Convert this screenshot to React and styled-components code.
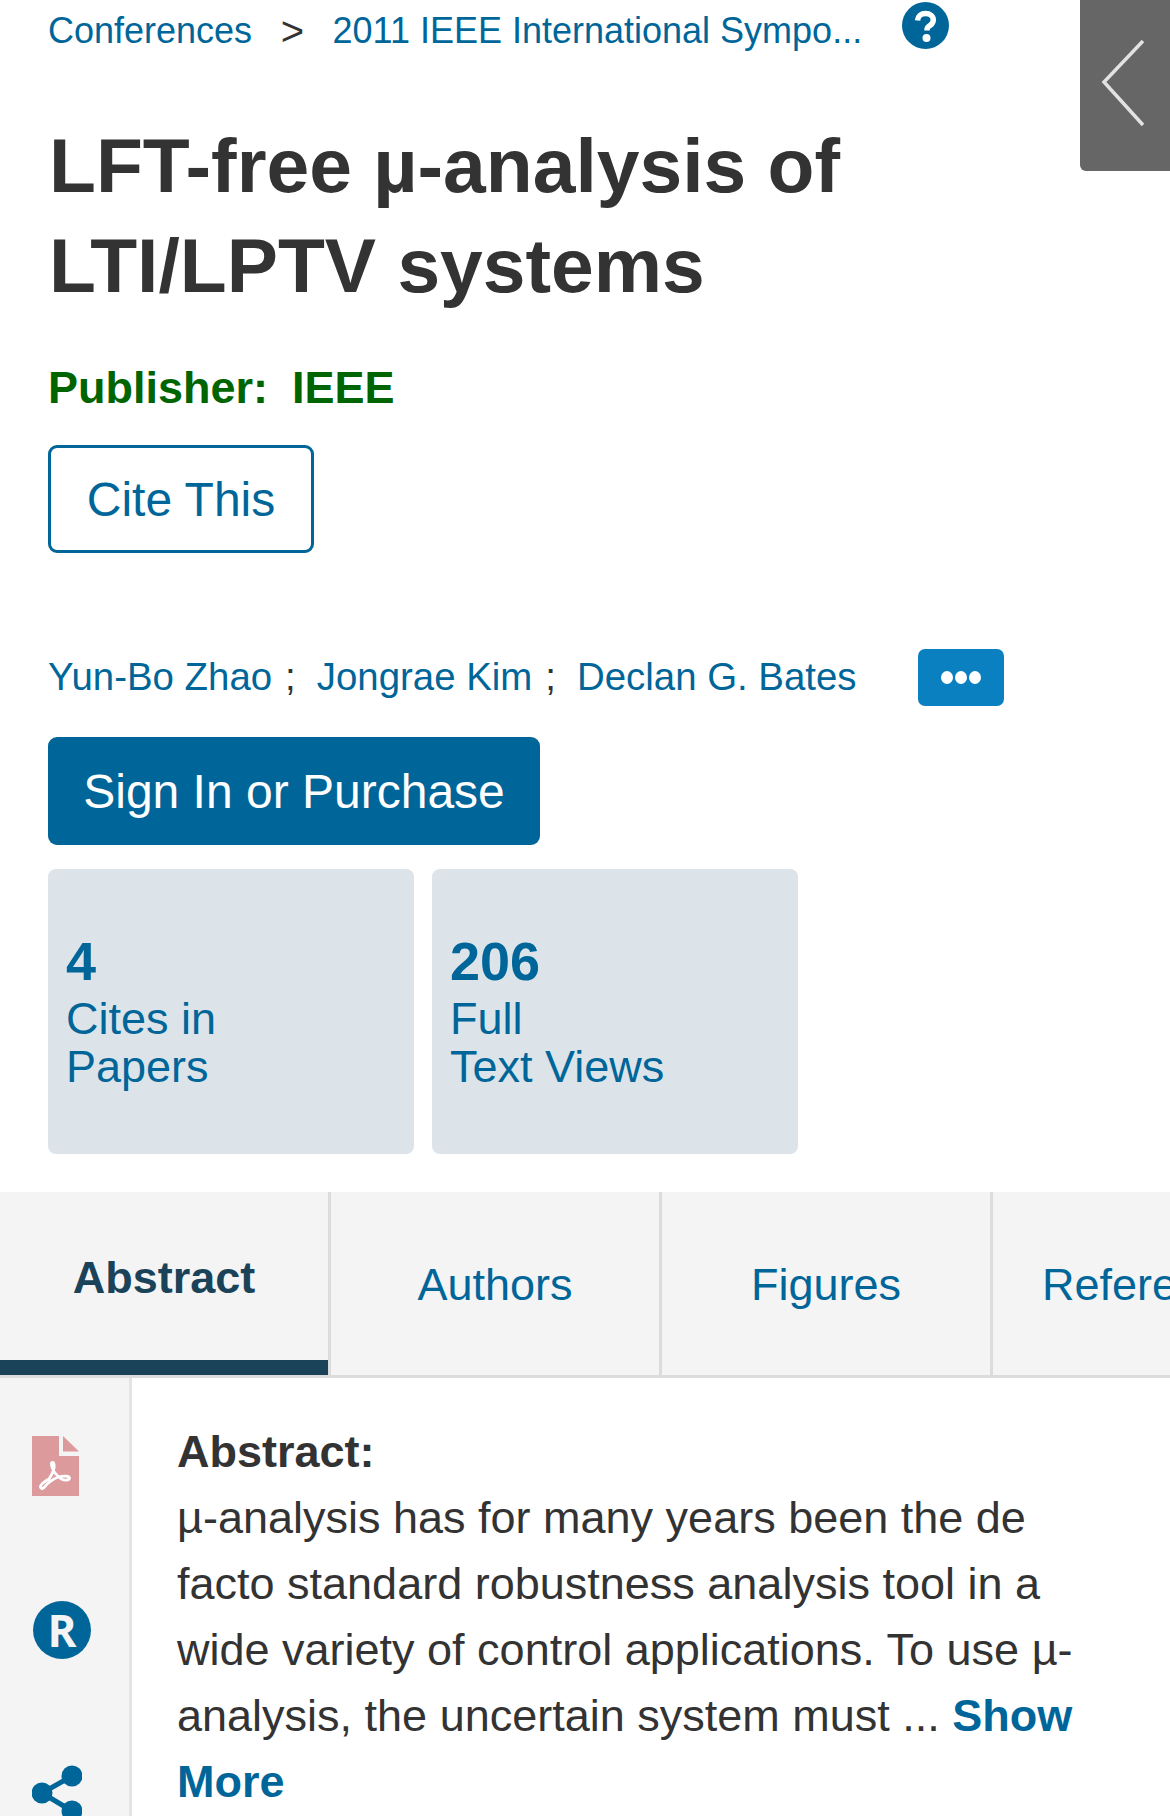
import styled, { createGlobalStyle } from "styled-components"

const GlobalStyle = createGlobalStyle`
    html, body {
        margin: 0;
        padding: 0;
        background: #fff;
        overflow: hidden;
    }
    * { box-sizing: border-box; }
`;

const tabs = ["Abstract", "Authors", "Figures", "References"];

const authors = ["Yun-Bo Zhao", "Jongrae Kim", "Declan G. Bates"];

const metrics = [
    { value: "4", lines: ["Cites in", "Papers"] },
    { value: "206", lines: ["Full", "Text Views"] },
];

export default function App() {
    return (
        <Page>
            <GlobalStyle />
            <CollapseHandle>
                <svg width="46" height="90" viewBox="0 0 46 90">
                    <path d="M42 3 L3 44 L42 87" fill="none" stroke="#e2e2e2" strokeWidth="3.500" />
                </svg>
            </CollapseHandle>

            <Header>
                <Breadcrumb>
                    <Crumb>Conferences</Crumb>
                    <CrumbSep>&gt;</CrumbSep>
                    <Crumb>2011 IEEE International Sympo...</Crumb>
                    <HelpIcon viewBox="0 0 47 47">
                        <circle cx="23.5" cy="23.5" r="23.5" fill="#006699" />
                        <path d="M15.5 18.5c.4-4.6 3.6-7 8-7 4.600 0 7.800 2.600 7.800 6.500 0 3-1.700 4.500-3.700 5.800-1.800 1.200-2.600 2-2.600 4v.7" fill="none" stroke="#fff" strokeWidth="5.500" />
                        <circle cx="24.500" cy="36" r="4" fill="#fff" />
                    </HelpIcon>
                </Breadcrumb>

                <Title>LFT-free µ-analysis of<br />LTI/LPTV systems</Title>
                <Publisher><span>Publisher:</span><span>IEEE</span></Publisher>
                <CiteButton>Cite This</CiteButton>

                <AuthorRow>
                    {authors.map((a, i) => (
                        <Author key={a}>
                            <AuthorLink>{a}</AuthorLink>
                            {i < authors.length - 1 && <AuthorSep>;</AuthorSep>}
                        </Author>
                    ))}
                    <MoreButton>
                        <Dot /><Dot /><Dot />
                    </MoreButton>
                </AuthorRow>

                <SignIn>Sign In or Purchase</SignIn>

                <Metrics>
                    {metrics.map((m) => (
                        <MetricCard key={m.value}>
                            <MetricValue>{m.value}</MetricValue>
                            {m.lines.map((l) => <MetricLabel key={l}>{l}</MetricLabel>)}
                        </MetricCard>
                    ))}
                </Metrics>
            </Header>

            <TabBar>
                {tabs.map((t, i) => (
                    <Tab key={t} $active={i === 0}>{t}</Tab>
                ))}
            </TabBar>

            <Body>
                <Rail>
                    <svg width="47" height="60" viewBox="0 0 47 60">
                        <path d="M0 0H27V20H47V60H0Z" fill="#dc9a9d" />
                        <path d="M31 0L47 15.500H31Z" fill="#dc9a9d" />
                        <path d="M9 52c-2-2 2-6 8-9 4-6 6-11 5-15-.5-2.500-3-2-2.500 1 .5 5 5 11 10 14 4 2 8 1 8-1s-6-2.500-11-1c-6 2-12 7-14 10-1 1.500-2.500 2-3.500 1z" fill="none" stroke="#fff" strokeWidth="2.800" strokeLinejoin="round" />
                    </svg>
                    <RIcon>R</RIcon>
                    <svg width="50" height="60" viewBox="0 0 50 60">
                        <circle cx="40" cy="11" r="10.500" fill="#006699" />
                        <circle cx="10" cy="28" r="10.500" fill="#006699" />
                        <circle cx="40" cy="46" r="10.500" fill="#006699" />
                        <path d="M40 11L10 28L40 46" fill="none" stroke="#006699" strokeWidth="5" />
                    </svg>
                </Rail>
                <Content>
                    <AbstractHead>Abstract:</AbstractHead>
                    <AbstractText>
                        µ-analysis has for many years been the de<br />
                        facto standard robustness analysis tool in a<br />
                        wide variety of control applications. To use µ-<br />
                        analysis, the uncertain system must ... <ShowMore>Show<br />More</ShowMore>
                    </AbstractText>
                </Content>
            </Body>
        </Page>
    )
};

const Page = styled.div`
    position: relative;
    width: 1170px;
    height: 1816px;
    overflow: hidden;
    background: #fff;
    font-family: "Liberation Sans", Arial, sans-serif;
    color: #333;
`;

const CollapseHandle = styled.div`
    position: absolute;
    top: 0;
    right: 0;
    width: 90px;
    height: 171px;
    background: #666;
    border-bottom-left-radius: 6px;
    padding: 38px 0 0 21px;
    svg { display: block; }
`;

const Header = styled.div`
    padding: 0 48px;
`;

const Breadcrumb = styled.div`
    display: flex;
    align-items: flex-start;
    height: 62px;
    font-size: 36px;
    line-height: 62px;
`;

const Crumb = styled.span`
    color: #006699;
`;

const CrumbSep = styled.span`
    color: #333;
    margin: 0 28.500px;
    font-size: 40px;
`;

const HelpIcon = styled.svg`
    width: 47px;
    height: 47px;
    margin: 2px 0 0 40px;
    flex: none;
`;

const Title = styled.h1`
    margin: 54px 0 0 1px;
    font-size: 76.8px;
    line-height: 99.500px;
    font-weight: 700;
    color: #333;
`;

const Publisher = styled.div`
    display: flex;
    gap: 24px;
    margin-top: 43px;
    font-size: 45px;
    line-height: 60px;
    font-weight: 700;
    color: #006400;
`;

const CiteButton = styled.button`
    display: block;
    width: 266px;
    height: 108px;
    margin-top: 27px;
    padding: 0;
    background: #fff;
    border: 3px solid #006699;
    border-radius: 9px;
    color: #006699;
    font: 400 48px "Liberation Sans", Arial, sans-serif;
`;

const AuthorRow = styled.div`
    display: flex;
    align-items: center;
    height: 58px;
    margin-top: 95px;
    font-size: 38.4px;
`;

const Author = styled.span`
    display: flex;
    white-space: pre;
`;

const AuthorLink = styled.span`
    color: #006699;
`;

const AuthorSep = styled.span`
    color: #333;
    margin: 0 21px 0 13px;
`;

const MoreButton = styled.div`
    display: flex;
    align-items: center;
    justify-content: center;
    gap: 2px;
    width: 86px;
    height: 57px;
    margin-left: 61px;
    border-radius: 7px;
    background: #0a80c0;
`;

const Dot = styled.i`
    display: block;
    width: 12px;
    height: 13px;
    border-radius: 50%;
    background: #fff;
`;

const SignIn = styled.button`
    display: block;
    width: 492px;
    height: 108px;
    margin-top: 31px;
    padding: 0;
    border: none;
    border-radius: 9px;
    background: #006699;
    color: #fff;
    font: 400 48px "Liberation Sans", Arial, sans-serif;
`;

const Metrics = styled.div`
    display: flex;
    gap: 18px;
    margin-top: 24px;
`;

const MetricCard = styled.div`
    width: 366px;
    height: 285px;
    padding: 61px 18px 0;
    border-radius: 8px;
    background: #dce4ea;
    color: #006699;
`;

const MetricValue = styled.div`
    font-size: 54px;
    line-height: 62px;
    font-weight: 700;
`;

const MetricLabel = styled.div`
    font-size: 45px;
    line-height: 48px;
    position: relative;
    top: 3px;
`;

const TabBar = styled.div`
    display: flex;
    height: 186px;
    margin-top: 38px;
    background: #f4f4f4;
    border-bottom: 3px solid #dcdcdc;
    overflow: hidden;
`;

const Tab = styled.div`
    flex: none;
    width: 331px;
    height: 183px;
    padding-top: ${(p) => (p.$active ? "57px" : "64px")};
    border-right: 3px solid #dcdcdc;
    box-shadow: ${(p) => (p.$active ? "inset 0 -15px 0 #1a4359" : "none")};
    text-align: center;
    font-size: 45px;
    line-height: 58px;
    font-weight: ${(p) => (p.$active ? 700 : 400)};
    color: ${(p) => (p.$active ? "#1a4359" : "#006699")};
    white-space: nowrap;
`;

const Body = styled.div`
    display: flex;
    height: 600px;
`;

const Rail = styled.div`
    flex: none;
    display: flex;
    flex-direction: column;
    align-items: flex-start;
    width: 132px;
    padding: 58px 0 0 32px;
    background: #f4f4f4;
    border-right: 3px solid #e4e4e4;
    svg { display: block; flex: none; }
    svg:last-child { margin-top: 106px; }
`;

const RIcon = styled.div`
    display: flex;
    align-items: center;
    justify-content: center;
    flex: none;
    width: 58px;
    height: 58px;
    margin: 105px 0 0 1px;
    border-radius: 50%;
    background: #006699;
    color: #f4f4f4;
    font-size: 44px;
    font-weight: 700;
    font-family: "Open Sans", sans-serif;
`;

const Content = styled.div`
    flex: 1;
    padding: 41px 0 0 45px;
    font-size: 45px;
    line-height: 66px;
`;

const AbstractHead = styled.div`
    font-weight: 700;
    color: #333;
`;

const AbstractText = styled.div`
    color: #333;
    white-space: nowrap;
`;

const ShowMore = styled.span`
    font-weight: 700;
    color: #006699;
`;
